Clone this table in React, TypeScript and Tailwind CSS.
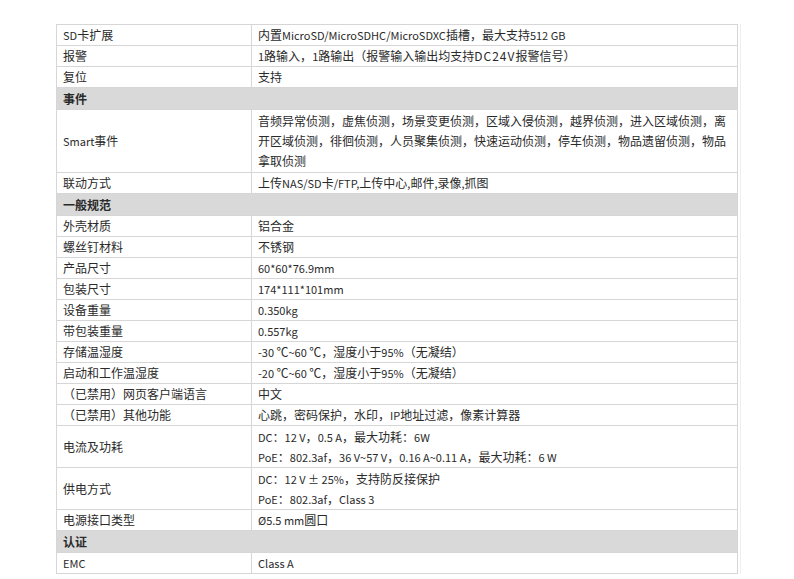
import React from "react";

type Row =
  | { kind: "header"; label: string }
  | { kind: "row"; label: string; lines: string[] };

const rows: Row[] = [
  { kind: "row", label: "SD卡扩展", lines: ["内置MicroSD/MicroSDHC/MicroSDXC插槽，最大支持512 GB"] },
  { kind: "row", label: "报警", lines: ["1路输入，1路输出（报警输入输出均支持DC24V报警信号）"] },
  { kind: "row", label: "复位", lines: ["支持"] },
  { kind: "header", label: "事件" },
  {
    kind: "row",
    label: "Smart事件",
    lines: [
      "音频异常侦测，虚焦侦测，场景变更侦测，区域入侵侦测，越界侦测，进入区域侦测，离",
      "开区域侦测，徘徊侦测，人员聚集侦测，快速运动侦测，停车侦测，物品遗留侦测，物品",
      "拿取侦测",
    ],
  },
  { kind: "row", label: "联动方式", lines: ["上传NAS/SD卡/FTP,上传中心,邮件,录像,抓图"] },
  { kind: "header", label: "一般规范" },
  { kind: "row", label: "外壳材质", lines: ["铝合金"] },
  { kind: "row", label: "螺丝钉材料", lines: ["不锈钢"] },
  { kind: "row", label: "产品尺寸", lines: ["60*60*76.9mm"] },
  { kind: "row", label: "包装尺寸", lines: ["174*111*101mm"] },
  { kind: "row", label: "设备重量", lines: ["0.350kg"] },
  { kind: "row", label: "带包装重量", lines: ["0.557kg"] },
  { kind: "row", label: "存储温湿度", lines: ["-30 ℃~60 ℃，湿度小于95%（无凝结）"] },
  { kind: "row", label: "启动和工作温湿度", lines: ["-20 ℃~60 ℃，湿度小于95%（无凝结）"] },
  { kind: "row", label: "（已禁用）网页客户端语言", lines: ["中文"] },
  { kind: "row", label: "（已禁用）其他功能", lines: ["心跳，密码保护，水印，IP地址过滤，像素计算器"] },
  {
    kind: "row",
    label: "电流及功耗",
    lines: ["DC：12 V，0.5 A，最大功耗：6W", "PoE：802.3af，36 V~57 V，0.16 A~0.11 A，最大功耗：6 W"],
  },
  { kind: "row", label: "供电方式", lines: ["DC：12 V ± 25%，支持防反接保护", "PoE：802.3af，Class 3"] },
  { kind: "row", label: "电源接口类型", lines: ["Ø5.5 mm圆口"] },
  { kind: "header", label: "认证" },
  { kind: "row", label: "EMC", lines: ["Class A"] },
];

const CJK = /([\u2103\u3000-\u303f\u4e00-\u9fff\uff00-\uffef]+)/;

function T({ s }: { s: string }) {
  const parts = s.split(CJK).filter((p) => p.length > 0);
  return (
    <>
      {parts.map((p, i) =>
        CJK.test(p) ? (
          <span key={i} className="text-[12px]">
            {p}
          </span>
        ) : p === "DC24V" ? (
          <span key={i} className="text-[12px] tracking-[1px]">
            {p}
          </span>
        ) : (
          <span key={i} className="text-[11px]">
            {p}
          </span>
        )
      )}
    </>
  );
}

export default function App() {
  return (
    <div
      className="w-[794px] h-[579px] bg-white pt-[24px] pl-[56px] text-[12px] text-[#2a2a2a]"
      style={{ fontFamily: '"Noto Sans CJK SC", sans-serif' }}
    >
      <div className="w-[685px] pr-[2px] border-r border-[#efefef]">
        <div className="w-[682px] border border-[#d6d6d6] border-b-0">
          {rows.map((r, i) =>
            r.kind === "header" ? (
              <div
                key={i}
                className="h-[22px] flex items-center bg-[#d9d9d9] border-b border-[#d6d6d6] px-[6px] font-bold"
              >
                {r.label}
              </div>
            ) : (
              <div
                key={i}
                className={`flex border-b border-[#d6d6d6] ${
                  r.lines.length === 3 ? "h-[63px]" : r.lines.length === 2 ? "h-[42px]" : "h-[21px]"
                }`}
              >
                <div className="w-[195px] shrink-0 flex items-center px-[6px] border-r border-[#d6d6d6] whitespace-nowrap">
                  <div className="leading-[20px]">
                    <T s={r.label} />
                  </div>
                </div>
                <div className="flex-1 flex flex-col justify-center px-[6px]">
                  {r.lines.map((l, j) => (
                    <div key={j} className="whitespace-nowrap leading-[20px]">
                      <T s={l} />
                    </div>
                  ))}
                </div>
              </div>
            )
          )}
        </div>
      </div>
    </div>
  );
}
